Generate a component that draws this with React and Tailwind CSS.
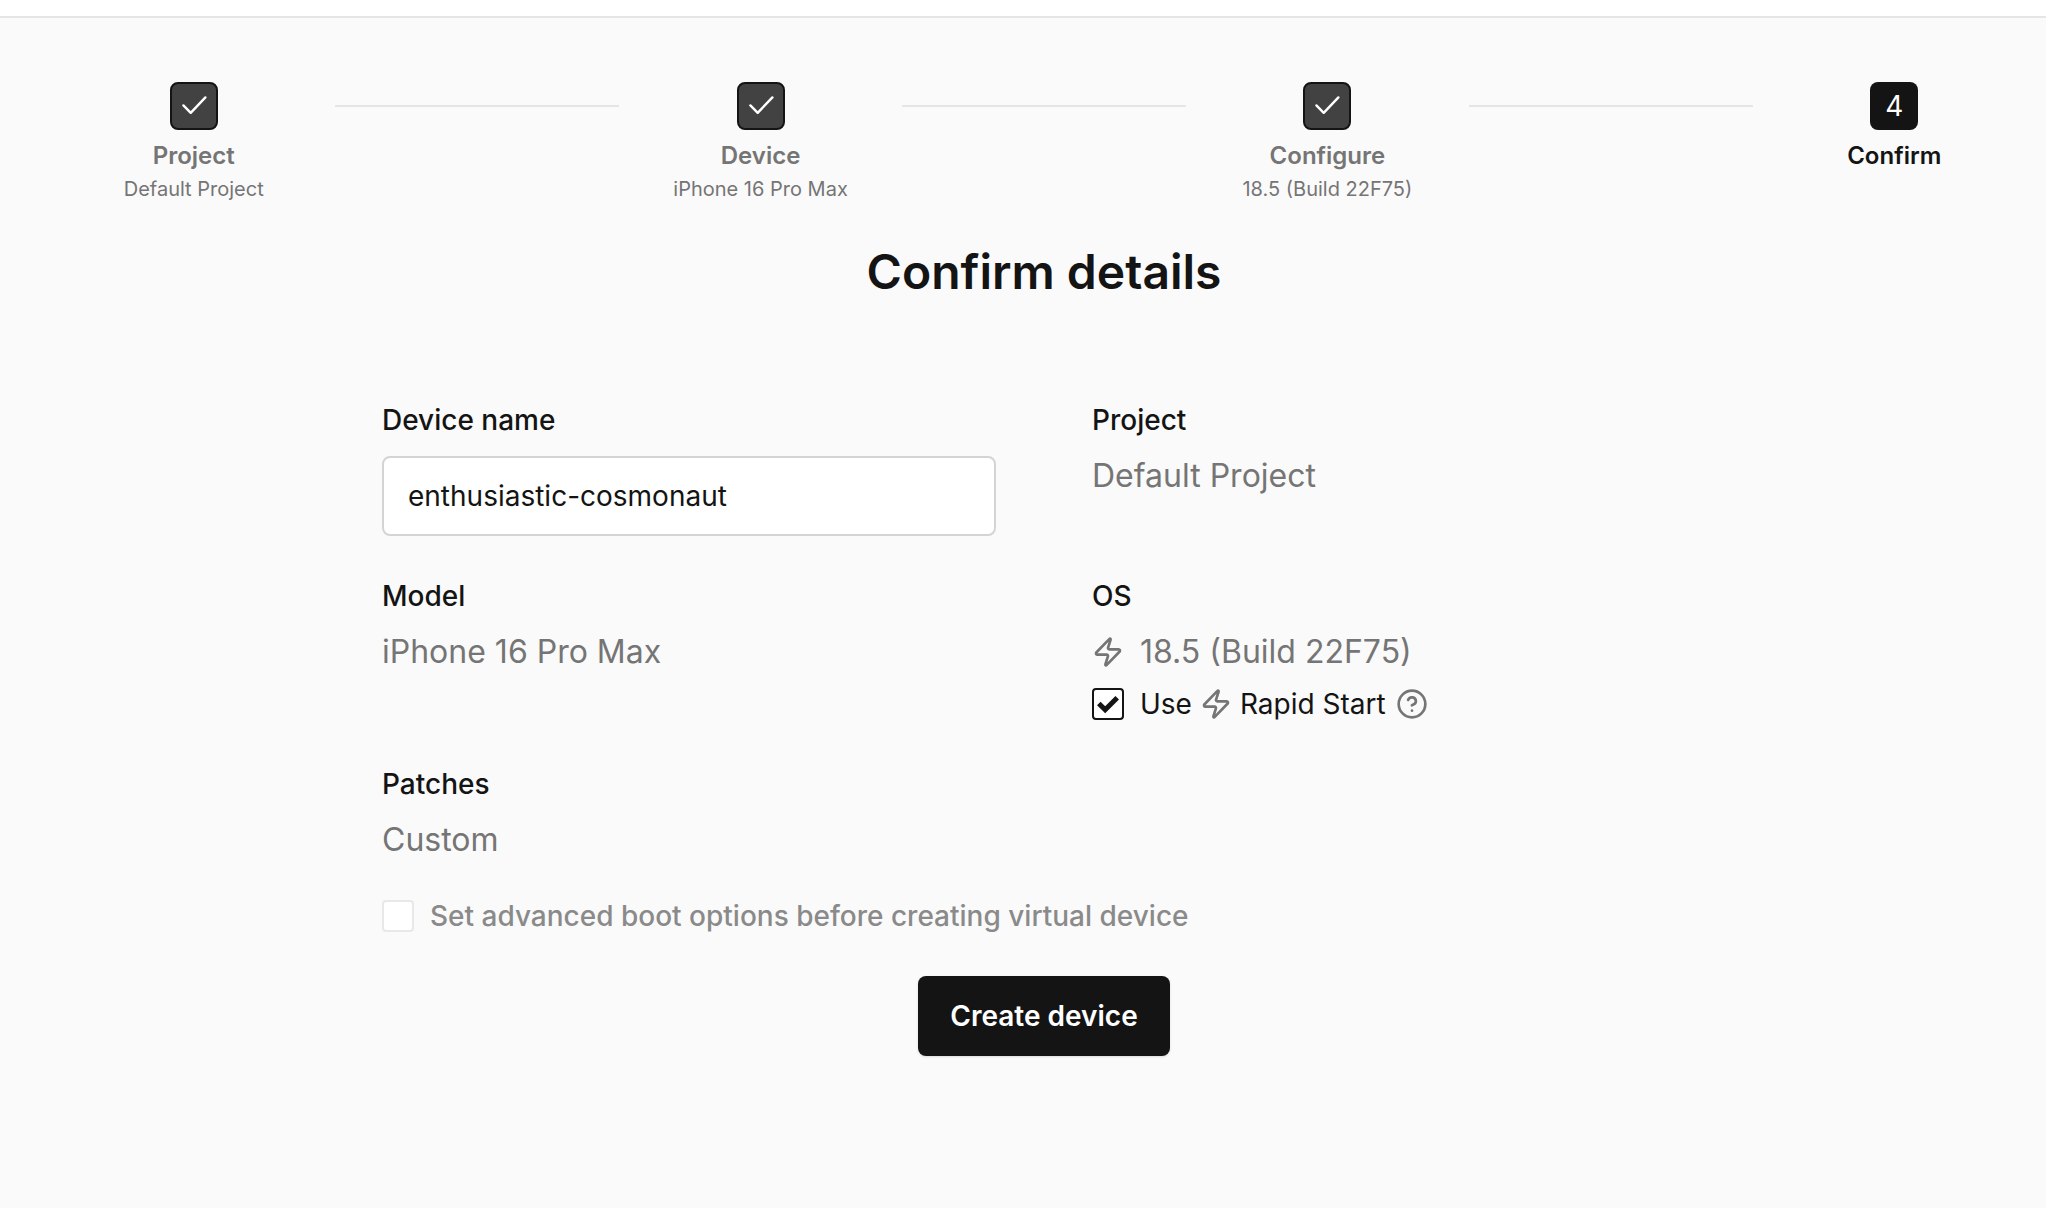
import React, { useState } from "react";
import { CircleQuestionMark, Zap } from "lucide-react";

const steps = [
    { title: "Project", detail: "Default Project", done: true },
    { title: "Device", detail: "iPhone 16 Pro Max", done: true },
    { title: "Configure", detail: "18.5 (Build 22F75)", done: true },
    { title: "Confirm", detail: "", done: false },
];

function StepCheck() {
    return (
        <svg viewBox="0 0 48 48" className="h-12 w-12 shrink-0" fill="none" stroke="currentColor" strokeWidth="2.4" strokeLinecap="round" strokeLinejoin="round" aria-hidden="true">
            <path d="M13.4 23.4 20.7 30.8 35.4 15.4" />
        </svg>
    );
}

function Step({ number, step }) {
    return (
        <li className={step.done ? "flex flex-1 flex-col items-center text-[#757575]" : "flex flex-1 flex-col items-center text-[#141414]"}>
            {step.done ? (
                <span className="flex h-12 w-12 items-center justify-center rounded-lg border-2 border-[#141414] bg-[#424242] text-white">
                    <StepCheck />
                </span>
            ) : (
                <span className="flex h-12 w-12 items-center justify-center rounded-lg bg-[#141414] text-[28px] text-white">
                    {number}
                </span>
            )}
            <span className="mt-2 text-2xl/9 font-semibold">{step.title}</span>
            <span className="text-xl/[30px]">{step.detail}</span>
        </li>
    );
}

function Checkbox({ id, checked, disabled, onChange }) {
    return (
        <span className="grid h-8 w-8 shrink-0">
            <input
                id={id}
                type="checkbox"
                checked={checked}
                disabled={disabled}
                onChange={onChange}
                className="col-start-1 row-start-1 h-8 w-8 appearance-none rounded border-2 border-[#141414] bg-white disabled:border-[#e8e8e8]"
            />
            {checked && (
                <svg viewBox="0 0 32 32" className="pointer-events-none col-start-1 row-start-1 h-8 w-8" fill="none" stroke="#141414" strokeWidth="5" aria-hidden="true">
                    <path d="M6.8 15.4 13.2 21.8 25.2 9.8" />
                </svg>
            )}
        </span>
    );
}

function Field({ label, children }) {
    return (
        <div>
            <dt className="text-[28px]/10 font-medium">{label}</dt>
            <dd className="mt-3 text-[32px]/12 text-[#757575]">{children}</dd>
        </div>
    );
}

function App() {
    const [name, setName] = useState("enthusiastic-cosmonaut");
    const [rapidStart, setRapidStart] = useState(true);

    return (
        <div className="flex min-h-screen flex-col bg-[#fafafa] font-['Inter',sans-serif] text-[#141414]">
            <header className="h-[18px] border-b-2 border-[#e5e5e5] bg-white" />

            <main className="flex flex-1 flex-col items-center pt-16 pr-[10px] pb-16 pl-[52px]">
                <ol className="flex w-full">
                    {steps.map((step, index) => (
                        <React.Fragment key={step.title}>
                            {index > 0 && <li aria-hidden="true" className="mt-[23px] h-[2px] flex-1 bg-[#e5e5e5]" />}
                            <Step number={index + 1} step={step} />
                        </React.Fragment>
                    ))}
                </ol>

                <h1 className="mt-9 text-5xl/16 font-semibold">Confirm details</h1>

                <form className="mt-24 flex w-full max-w-[1324px] flex-col" onSubmit={(e) => e.preventDefault()}>
                    <dl className="grid grid-cols-2 gap-x-24 gap-y-10">
                        <div>
                            <dt>
                                <label htmlFor="name" className="block text-[28px]/10 font-medium">Device name</label>
                            </dt>
                            <dd className="mt-4">
                                <input
                                    id="name"
                                    type="text"
                                    value={name}
                                    onChange={(e) => setName(e.target.value)}
                                    className="h-20 w-full rounded-lg border-2 border-[#d4d4d4] bg-white px-6 text-[28px]"
                                />
                            </dd>
                        </div>

                        <Field label="Project">Default Project</Field>
                        <Field label="Model">iPhone 16 Pro Max</Field>

                        <Field label="OS">
                            <div className="flex items-center gap-4">
                                <Zap size={32} />
                                18.5 (Build 22F75)
                            </div>
                            <div className="mt-2 flex items-center gap-2.5 text-[28px]/10">
                                <label htmlFor="rapid" className="flex items-center gap-4 text-[#141414]">
                                    <Checkbox id="rapid" checked={rapidStart} onChange={(e) => setRapidStart(e.target.checked)} />
                                    <span className="flex items-center gap-2">
                                        Use
                                        <Zap size={32} className="text-[#757575]" />
                                        Rapid Start
                                    </span>
                                </label>
                                <CircleQuestionMark size={32} />
                            </div>
                        </Field>

                        <Field label="Patches">Custom</Field>
                    </dl>

                    <label htmlFor="boot" className="mt-8 flex items-center gap-4 text-[28px]/10 font-medium text-[#8a8a8a]">
                        <Checkbox id="boot" checked={false} disabled />
                        Set advanced boot options before creating virtual device
                    </label>

                    <button type="submit" className="mt-10 h-20 self-center rounded-lg bg-[#141414] px-8 text-[28px] font-semibold text-white shadow-sm">
                        Create device
                    </button>
                </form>
            </main>
        </div>
    );
}

export default App;
